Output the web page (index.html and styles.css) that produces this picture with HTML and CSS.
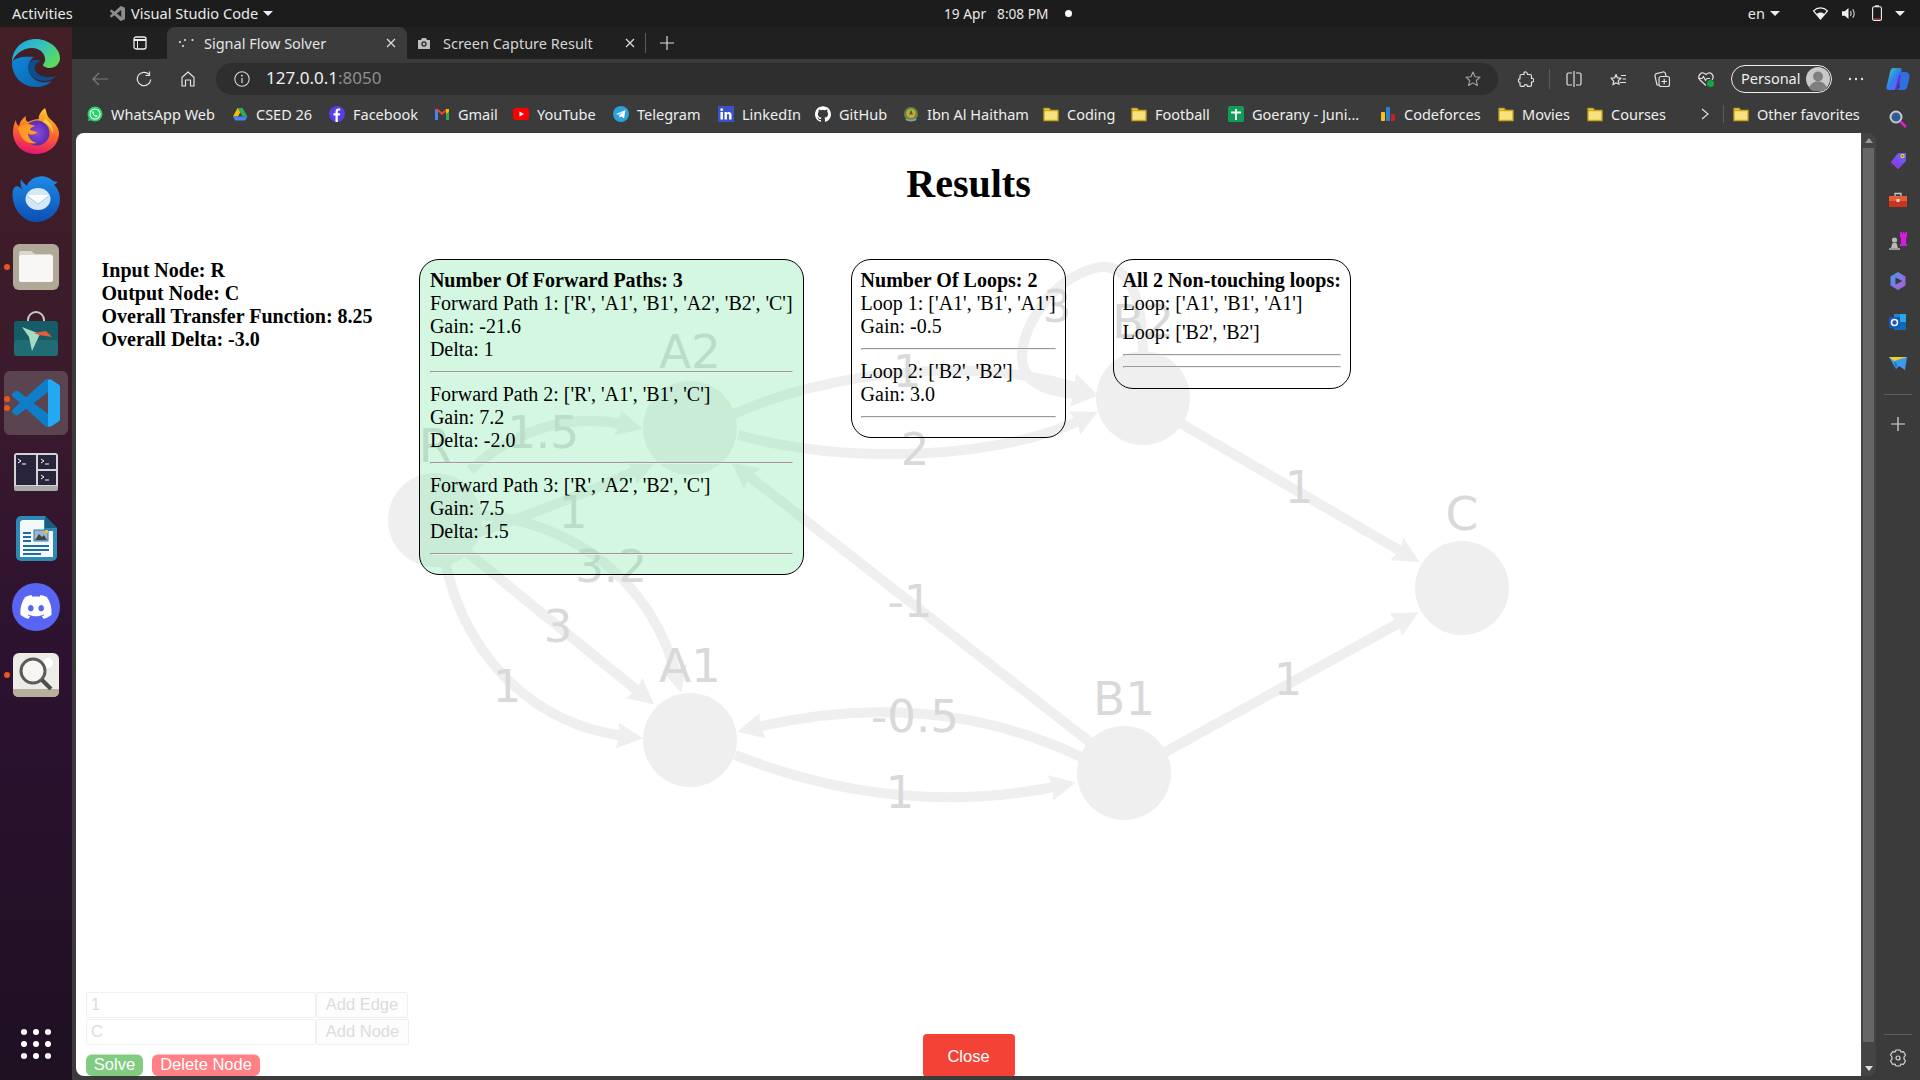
FILE: index.html
```html
<!DOCTYPE html>
<html lang="en">
<head>
<meta charset="utf-8">
<title>Signal Flow Solver</title>
<link rel="stylesheet" href="styles.css">
</head>
<body>
<svg class="defs" aria-hidden="true">
  <defs>
    <linearGradient id="edgeTop" x1="0" y1="0" x2="1" y2="0.6"><stop offset="0" stop-color="#1b9de2"/><stop offset=".55" stop-color="#35c1c0"/><stop offset="1" stop-color="#5ada5f"/></linearGradient>
    <linearGradient id="edgeBody" x1="0" y1="0" x2="1" y2="1"><stop offset="0" stop-color="#0f86d8"/><stop offset="1" stop-color="#0b62ad"/></linearGradient>
    <linearGradient id="foxOuter" x1="0.6" y1="0" x2="0.4" y2="1"><stop offset="0" stop-color="#ffc928"/><stop offset=".5" stop-color="#ff6a2b"/><stop offset="1" stop-color="#e3146f"/></linearGradient>
    <radialGradient id="foxCore"><stop offset="0" stop-color="#8e4bd8"/><stop offset="1" stop-color="#5a2bb0"/></radialGradient>
    <linearGradient id="tbird" x1="0" y1="0" x2="0" y2="1"><stop offset="0" stop-color="#1f8ae6"/><stop offset="1" stop-color="#0b4fb4"/></linearGradient>
    <linearGradient id="copilot" x1="0" y1="0" x2="1" y2="1"><stop offset="0" stop-color="#3fd8a8"/><stop offset=".5" stop-color="#2f7df0"/><stop offset="1" stop-color="#7a5af0"/></linearGradient>
    <linearGradient id="bingLike" x1="0" y1="0" x2="1" y2="1"><stop offset="0" stop-color="#3aa0f0"/><stop offset="1" stop-color="#c050d8"/></linearGradient>
    <symbol id="folder" viewBox="0 0 16 16"><path d="M1 2.500h5l1.500 2H15v10H1z" fill="#f7e27d" stroke="#c9a51c" stroke-width="1.300" stroke-linejoin="round"/><path d="M1 4.500h6.500" stroke="#c9a51c" stroke-width="1.300"/></symbol>
    <symbol id="vscode" viewBox="0 0 24 24"><path d="M23.15 2.587L18.21.21a1.494 1.494 0 0 0-1.705.29l-9.46 8.63-4.12-3.128a.999.999 0 0 0-1.276.057L.327 7.261A1 1 0 0 0 .326 8.74L3.899 12 .326 15.26a1 1 0 0 0 .001 1.479L1.65 17.94a.999.999 0 0 0 1.276.057l4.12-3.128 9.46 8.63a1.492 1.492 0 0 0 1.704.29l4.942-2.377A1.5 1.5 0 0 0 24 20.06V3.939a1.5 1.5 0 0 0-.85-1.352zm-5.146 14.861L10.826 12l7.178-5.448v10.896z"/></symbol>
    <marker id="head" viewBox="0 0 26 26" markerUnits="userSpaceOnUse" markerWidth="26" markerHeight="26" refX="14" refY="13" orient="auto"><path d="M0 0L26 13L0 26L3 13z" fill="#efefef"/></marker>
  </defs>
</svg>

<div class="screen">
  <header class="topbar">
    <div class="top-left">
      <span class="activities">Activities</span>
      <svg class="top-app-icon" viewBox="0 0 24 24"><use href="#vscode" fill="#8d8d8d"/></svg>
      <span>Visual Studio Code</span>
      <i class="caret"></i>
    </div>
    <div class="top-center">
      <span>19 Apr</span><span>8:08 PM</span><i class="rec-dot"></i>
    </div>
    <div class="top-right">
      <span class="lang">en</span><i class="caret"></i>
      <svg class="tray tray-wifi" viewBox="0 0 16 14"><path d="M8 13L.5 4.200C2.500 2.200 5 1 8 1s5.500 1.200 7.500 3.200z" fill="none" stroke="#f2f2f2" stroke-width="1.300"/><path d="M8 13L3.600 7.800C4.800 6.700 6.300 6 8 6s3.200.7 4.400 1.800z" fill="#f2f2f2"/></svg>
      <svg class="tray tray-sound" viewBox="0 0 16 14"><path d="M1 4.500h3L8 1v12L4 9.500H1z" fill="#f2f2f2"/><path d="M10 4.500c1 1.500 1 3.500 0 5M12.500 2.500c2 2.700 2 6.300 0 9" fill="none" stroke="#cfcfcf" stroke-width="1.200"/></svg>
      <svg class="tray tray-batt" viewBox="0 0 10 16"><rect x=".6" y="1.800" width="8.800" height="13.600" rx="1.500" fill="none" stroke="#f2f2f2" stroke-width="1.100"/><rect x="3" y=".3" width="4" height="1.500" fill="#f2f2f2"/><rect x="2" y="13" width="6" height="1.200" fill="#c01c28"/></svg>
      <i class="caret caret-last"></i>
    </div>
  </header>

  <div class="desktop">
    <nav class="dock">
      <div class="dock-item">
        <svg class="dock-icon" viewBox="0 0 48 48"><path d="M24 0C10 0 0 10 0 24c2-8 10-15 20-15 9 0 14 7 13 13-.5 2-2 3-2 4 0 1 3 3 7 3 5 0 10-4 10-10C48 9 36 0 24 0z" fill="url(#edgeTop)"/><path d="M0 24c0 13 10 24 24 24 6 0 12-2 16-6-8 3-18 1-22-7-3-7-1-14 4-17C12 17 2 18 0 24z" fill="url(#edgeBody)"/><path d="M16 28c0 9 9 14 17 14 4 0 8-1.500 11-5-6 2-13 2-18-2-3-2-4-5-3-8 1-3 4-5 6-5-5-3-13 0-13 6z" fill="#0c4f90"/></svg>
      </div>
      <div class="dock-item">
        <svg class="dock-icon" viewBox="0 0 48 48"><path d="M33 1c2 4 1 7 5 11 5 4 9 9 9 14 0 12-10 21-23 21S1 38 1 25c0-4 1-9 3-12 0 3 1 5 3 6 1-5 4-8 7-10-1 3 0 5 2 6 4-2 8-3 11-3-1-3 2-8 6-11z" fill="url(#foxOuter)"/><circle cx="25" cy="26" r="12.500" fill="url(#foxCore)"/><path d="M6 21c4-4 11-5 17-2-3 1-5 2-5 4 2 1 7 1 7 3-4 2-8 2-9 0 0 5 4 9 9 10-8 2-15-3-17-9z" fill="#ff9a24"/><path d="M33 12c5 3 9 8 8 15-1-5-5-10-10-12z" fill="#ffd23a"/></svg>
      </div>
      <div class="dock-item">
        <svg class="dock-icon" viewBox="0 0 48 48"><path d="M9 4c-1 5 0 8 2 11C7 11 3 9 1 15c-3 13 7 32 23 32 13 0 24-10 24-23 0-6-3-12-6-14l4-3-5-1c-4-4-10-6-16-4-5 1-9 5-10 9-3-3-5-4-6-7z" fill="url(#tbird)"/><ellipse cx="26" cy="24" rx="12.500" ry="11" fill="#d4e8f8"/><path d="M14 20l12 9 12-9" fill="#fff" stroke="#a5c8ea" stroke-width="1"/></svg>
      </div>
      <div class="dock-item running">
        <svg class="dock-icon" viewBox="0 0 48 48"><rect x="1" y="1" width="46" height="46" rx="6" fill="#b0a997"/><path d="M7 10a2 2 0 0 1 2-2h10l4 3h15a3 3 0 0 1 3 3v22a3 3 0 0 1-3 3H9a2 2 0 0 1-2-2z" fill="#dcd8cf"/><rect x="7" y="12" width="34" height="27" rx="2.500" fill="#f8f7f5"/></svg>
      </div>
      <div class="dock-item">
        <svg class="dock-icon" viewBox="0 0 48 48"><path d="M16 11V9a8 8 0 0 1 16 0v2" fill="none" stroke="#c8c8c8" stroke-width="2"/><rect x="2" y="10" width="44" height="35" rx="3" fill="#155c66"/><rect x="2" y="29" width="44" height="16" rx="3" fill="#1f6c74"/><path d="M10 16l18 7-8 17-3-14z" fill="#a6dac2"/><path d="M22 22l12-2 6 6-13-2z" fill="#e9583a"/></svg>
      </div>
      <div class="dock-item active running two">
        <div class="tile"><svg class="dock-icon" viewBox="0 0 24 24"><use href="#vscode" fill="#0f7dc8"/><path d="M18 6.600V.4c.4-.3 1-.4 1.500-.2l3.650 2.387A1.500 1.500 0 0 1 24 3.939V20.060a1.500 1.500 0 0 1-.85 1.353L19.500 23.800c-.5.200-1.100.1-1.500-.2z" fill="#23a9f2"/></svg></div>
      </div>
      <div class="dock-item">
        <svg class="dock-icon" viewBox="0 0 48 48"><rect x="2" y="6" width="44" height="37" rx="3" fill="#d4d4d4"/><rect x="2" y="39" width="44" height="5" rx="2" fill="#a8a8a8"/><rect x="4" y="8" width="20" height="30" fill="#28243c"/><rect x="26" y="8" width="18" height="14" fill="#28243c"/><rect x="26" y="24" width="18" height="14" fill="#28243c"/><path d="M6 12l3 2-3 2M29 12l3 2-3 2M29 28l3 2-3 2" stroke="#fff" fill="none"/><path d="M10 17h4M33 17h4M33 33h4" stroke="#fff"/></svg>
      </div>
      <div class="dock-item">
        <svg class="dock-icon" viewBox="0 0 48 48"><path d="M9 1h24l12 12v28a5 5 0 0 1-5 5H9a5 5 0 0 1-5-5V6a5 5 0 0 1 5-5z" fill="#2e8ab5"/><path d="M10 5h22v11h9v26H8V7z" fill="#f4f8fb"/><path d="M33 1l12 12H33z" fill="#185d80"/><rect x="11" y="17" width="8" height="2" fill="#1f6d9c"/><rect x="11" y="21" width="8" height="2" fill="#1f6d9c"/><rect x="11" y="25" width="8" height="2" fill="#1f6d9c"/><rect x="22" y="15" width="14" height="11" fill="#9fb8c8" stroke="#2d7ca8"/><path d="M23 25l4-6 3 3 2-2 3 5z" fill="#444"/><rect x="33" y="15" width="3" height="3" fill="#f0c030"/><rect x="11" y="30" width="26" height="2" fill="#1f6d9c"/><rect x="11" y="34" width="26" height="2" fill="#1f6d9c"/><rect x="11" y="38" width="18" height="2" fill="#1f6d9c"/></svg>
      </div>
      <div class="dock-item">
        <svg class="dock-icon" viewBox="0 0 48 48"><circle cx="24" cy="24" r="24" fill="#5865f2"/><g transform="translate(8.400 8.400) scale(1.300)"><path fill="#fff" d="M20.317 4.3698a19.7913 19.7913 0 00-4.8851-1.5152.0741.0741 0 00-.0785.0371c-.211.3753-.4447.8648-.6083 1.2495-1.8447-.2762-3.68-.2762-5.4868 0-.1636-.3933-.4058-.8742-.6177-1.2495a.077.077 0 00-.0785-.037 19.7363 19.7363 0 00-4.8852 1.515.0699.0699 0 00-.0321.0277C.5334 9.0458-.319 13.5799.0992 18.0578a.0824.0824 0 00.0312.0561c2.0528 1.5076 4.0413 2.4228 5.9929 3.0294a.0777.0777 0 00.0842-.0276c.4616-.6304.8731-1.2952 1.226-1.9942a.076.076 0 00-.0416-.1057c-.6528-.2476-1.2743-.5495-1.8722-.8923a.077.077 0 01-.0076-.1277c.1258-.0943.2517-.1923.3718-.2914a.0743.0743 0 01.0776-.0105c3.9278 1.7933 8.18 1.7933 12.0614 0a.0739.0739 0 01.0785.0095c.1202.099.246.1981.3728.2924a.077.077 0 01-.0066.1276 12.2986 12.2986 0 01-1.873.8914.0766.0766 0 00-.0407.1067c.3604.698.7719 1.3628 1.225 1.9932a.076.076 0 00.0842.0286c1.961-.6067 3.9495-1.5219 6.0023-3.0294a.077.077 0 00.0313-.0552c.5004-5.177-.8382-9.6739-3.5485-13.6604a.061.061 0 00-.0312-.0286zM8.02 15.3312c-1.1825 0-2.1569-1.0857-2.1569-2.419 0-1.3332.9555-2.4189 2.157-2.4189 1.2108 0 2.1757 1.0952 2.1568 2.419 0 1.3332-.9555 2.4189-2.1569 2.4189zm7.9748 0c-1.1825 0-2.1569-1.0857-2.1569-2.419 0-1.3332.9554-2.4189 2.1569-2.4189 1.2108 0 2.1757 1.0952 2.1568 2.419 0 1.3332-.946 2.4189-2.1568 2.4189Z"/></g></svg>
      </div>
      <div class="dock-item running">
        <svg class="dock-icon" viewBox="0 0 48 48"><rect x="1" y="2" width="46" height="44" rx="6" fill="#ecebe6"/><path d="M1 38h46v3a5 5 0 0 1-5 5H6a5 5 0 0 1-5-5z" fill="#b7b19c"/><circle cx="36" cy="12" r="5" fill="#fff"/><circle cx="21" cy="20" r="12" fill="#f6f5f2" stroke="#5b5b5b" stroke-width="3"/><path d="M30 29l9 9" stroke="#4d4d4d" stroke-width="4"/></svg>
      </div>
      <div class="dock-item apps">
        <svg class="apps-icon" viewBox="0 0 30 30"><g fill="#fff"><circle cx="3" cy="3" r="3"/><circle cx="15" cy="3" r="3"/><circle cx="27" cy="3" r="3"/><circle cx="3" cy="15" r="3"/><circle cx="15" cy="15" r="3"/><circle cx="27" cy="15" r="3"/><circle cx="3" cy="27" r="3"/><circle cx="15" cy="27" r="3"/><circle cx="27" cy="27" r="3"/></g></svg>
      </div>
    </nav>

    <div class="browser">
      <div class="tabstrip">
        <div class="tab-cell">
          <svg class="ic14" viewBox="0 0 14 14"><rect x="1" y="1" width="12" height="12" rx="2" fill="none" stroke="#eee" stroke-width="1.300"/><path d="M1 4h12" stroke="#eee" stroke-width="2"/><path d="M4.500 4v9" stroke="#eee"/></svg>
        </div>
        <div class="tab tab-active">
          <svg class="tab-fav" viewBox="0 0 17 12"><g fill="#ddd"><circle cx="2" cy="5" r="1.100"/><circle cx="7" cy="3" r="1.100"/><circle cx="14.500" cy="3" r="1.100"/><circle cx="5" cy="9" r="1.100"/></g></svg>
          <span class="tab-title">Signal Flow Solver</span>
          <svg class="tab-close" viewBox="0 0 12 12"><path d="M2 2l8 8M10 2l-8 8" stroke="#ddd" stroke-width="1.200"/></svg>
        </div>
        <div class="tab tab-other">
          <svg class="tab-fav-cam" viewBox="0 0 14 14"><path d="M1 4h3l1-2h4l1 2h3v9H1z" fill="#bdbdbd"/><circle cx="7" cy="8" r="2.700" fill="#333"/><circle cx="7" cy="8" r="1.300" fill="#bdbdbd"/></svg>
          <span class="tab-title">Screen Capture Result</span>
          <svg class="tab-close" viewBox="0 0 12 12"><path d="M2 2l8 8M10 2l-8 8" stroke="#ddd" stroke-width="1.200"/></svg>
        </div>
        <i class="tab-sep"></i>
        <div class="tab-plus">
          <svg class="ic14" viewBox="0 0 14 14"><path d="M7 0v14M0 7h14" stroke="#ddd" stroke-width="1.200"/></svg>
        </div>
      </div>

      <div class="toolbar">
        <div class="tool"><svg class="ic16" viewBox="0 0 16 16"><path d="M16 8H1M7 2L1 8l6 6" fill="none" stroke="#7d7d7d" stroke-width="1.200"/></svg></div>
        <div class="tool"><svg class="ic16" viewBox="0 0 16 16"><path d="M13 3.500A6.700 6.700 0 1 0 14.700 8.500" fill="none" stroke="#e2e2e2" stroke-width="1.200"/><path d="M13.500 .5v4h-4" fill="none" stroke="#e2e2e2" stroke-width="1.200"/></svg></div>
        <div class="tool"><svg class="ic16" viewBox="0 0 16 16"><path d="M2 15V6.500L8 1l6 5.500V15h-3.500V9h-5v6z" fill="none" stroke="#e2e2e2" stroke-width="1.200" stroke-linejoin="round"/></svg></div>
        <div class="address">
          <svg class="ic16 info" viewBox="0 0 16 16"><circle cx="8" cy="8" r="7.200" fill="none" stroke="#d8d8d8" stroke-width="1.100"/><path d="M8 7v5" stroke="#d8d8d8" stroke-width="1.200"/><circle cx="8" cy="4.700" r=".9" fill="#d8d8d8"/></svg>
          <span class="url">127.0.0.1<span class="url-port">:8050</span></span>
          <svg class="ic16 addr-star" viewBox="0 0 16 16"><path d="M8 1l2.100 4.700 5 .5-3.800 3.300 1.100 5L8 11.900l-4.400 2.600 1.100-5L.9 6.200l5-.5z" fill="none" stroke="#a5a5a5" stroke-width="1.100" stroke-linejoin="round"/></svg>
        </div>
        <div class="tool"><svg class="ic16" viewBox="0 0 16 16"><path d="M6 1.500c1-1 3-.7 3.300 1l.2 1h2.500c.8 0 1.500.7 1.500 1.500v2.500h1c1.700.2 1.700 3.300 0 3.500h-1V14c0 .8-.7 1.300-1.500 1.300h-2.500c-.2-2.200-3.300-2.200-3.500 0H3.500c-.8 0-1.500-.5-1.500-1.300v-2.500C0 11.300-.3 8 2 7.700V5c0-.8.7-1.500 1.500-1.500H6z" fill="none" stroke="#e2e2e2" stroke-width="1.200"/></svg></div>
        <i class="tool-sep"></i>
        <div class="tool"><svg class="ic16" viewBox="0 0 16 16"><path d="M6 2H2.500a1.500 1.500 0 0 0-1.500 1.500v9A1.500 1.500 0 0 0 2.500 14H6M10 2h3.500A1.500 1.500 0 0 1 15 3.500v9a1.500 1.500 0 0 1-1.500 1.500H10" fill="none" stroke="#e2e2e2" stroke-width="1.200"/><path d="M8 0v16" stroke="#e2e2e2" stroke-width="1.200"/></svg></div>
        <div class="tool"><svg class="ic16" viewBox="0 0 16 16"><path d="M6 1.500l1.500 3.400 3.500.3-2.700 2.400.8 3.700L6 9.800l-3.100 2 .8-3.700L1 5.200l3.500-.3z" fill="none" stroke="#e2e2e2" stroke-width="1.200" stroke-linejoin="round" transform="translate(0 2)"/><path d="M11 4.500h5M12.500 8h3.500M10 11.500h6" stroke="#e2e2e2" stroke-width="1.200"/></svg></div>
        <div class="tool"><svg class="ic16" viewBox="0 0 16 16"><path d="M5 14H3L1 5a2 2 0 0 1 1.500-2.400L9 1a2 2 0 0 1 2.400 1.500L12 5" fill="none" stroke="#e2e2e2" stroke-width="1.200"/><rect x="5" y="5.500" width="10.500" height="10" rx="2" fill="#3b3b3b" stroke="#e2e2e2" stroke-width="1.200"/><path d="M10.200 7.800v5.400M7.500 10.500h5.400" stroke="#e2e2e2" stroke-width="1.200"/></svg></div>
        <div class="tool"><svg class="ic16" viewBox="0 0 16 16"><path d="M8 14.500L2 9C-1 5 3-.5 8 3.500 13-.5 17 5 14 9" fill="none" stroke="#e2e2e2" stroke-width="1.200"/><path d="M0 7.500h4l1.500-2 2 4 1.500-2h3" fill="none" stroke="#e2e2e2" stroke-width="1.100"/><circle cx="12.500" cy="12.500" r="3.500" fill="#16a34a"/></svg></div>
        <div class="profile">
          <span>Personal</span>
          <svg class="avatar" viewBox="0 0 24 24"><circle cx="12" cy="12" r="12" fill="#c8c8c8"/><circle cx="12" cy="9.500" r="5" fill="#7f7f7f"/><path d="M3 21c2-5 5-6.500 9-6.500s7 1.500 9 6.500a12 12 0 0 1-18 0z" fill="#7f7f7f"/></svg>
        </div>
        <div class="tool"><svg class="ic16" viewBox="0 0 16 4"><g fill="#e2e2e2"><circle cx="2" cy="2" r="1.200"/><circle cx="8" cy="2" r="1.200"/><circle cx="14" cy="2" r="1.200"/></g></svg></div>
        <div class="copilot-cell"><svg class="copilot" viewBox="0 0 24 24"><path d="M7 1h7c1.500 0 2 1.500 1.500 3L11 20c-.5 2-2 3-4 3H3c-2 0-3-1.500-2.500-3L4 5c.5-2 1.500-4 3-4z" fill="url(#copilot)"/><path d="M13 5h6c3 0 5 2 4.500 5l-2 9c-.5 2.500-2 4-4.500 4h-7c2 0 3-1 3.500-3z" fill="#2f6fe4"/><path d="M9 22l4-14 2 .2L11 23z" fill="#6a2bdc"/></svg></div>
      </div>

      <div class="lower">
        <div class="lower-main">
          <div class="bookmarks">
            <a class="bm"><svg class="bm-ic" viewBox="0 0 16 16"><circle cx="8" cy="8" r="7.500" fill="#25d366"/><path d="M1 15l1.200-4.500L5 14z" fill="#25d366"/><circle cx="8" cy="8" r="5.500" fill="#fff"/><circle cx="8" cy="8" r="4.500" fill="#25d366"/><path d="M5.800 5.500c1-.8 1 1 1.200 1.500l-.4.800c.5 1 1 1.400 1.800 1.800l.8-.5c.5.200 2 .6 1.400 1.500-1.500 1.600-6.600-2.500-4.800-5.100z" fill="#fff"/></svg><span>WhatsApp Web</span></a>
            <a class="bm"><svg class="bm-ic" viewBox="0 0 16 16"><path d="M5.500 1h5L6 9.500H1z" fill="#fbbc04" transform="translate(0 1)"/><path d="M10.500 2l5 8.500H10.500L5.500 2z" fill="#34a853"/><path d="M1 10.500h14.500l-2.500 4H3.200z" fill="#4285f4"/></svg><span>CSED 26</span></a>
            <a class="bm"><svg class="bm-ic" viewBox="0 0 16 16"><circle cx="8" cy="8" r="8" fill="#5b3de8"/><path d="M8.800 16V9.500h2l.4-2.300H8.800V5.800c0-.8.3-1.200 1.200-1.200h1.200V2.700c-2.800-.6-4.700.2-4.700 2.900v1.600h-2v2.300h2V16z" fill="#fff"/></svg><span>Facebook</span></a>
            <a class="bm"><svg class="bm-ic" viewBox="0 0 16 16"><path d="M1 3h3v11H1z" fill="#4285f4"/><path d="M12 3h3v11h-3z" fill="#34a853"/><path d="M1 3l3 0 4 3.500L12 3l3 0-7 6z" fill="#ea4335"/><path d="M12 3h3v2.500l-3 2.500z" fill="#fbbc04"/></svg><span>Gmail</span></a>
            <a class="bm"><svg class="bm-ic" viewBox="0 0 16 16"><rect y="2" width="16" height="12" rx="3" fill="#f00"/><path d="M6.500 5.500l4.500 2.500-4.500 2.500z" fill="#fff"/></svg><span>YouTube</span></a>
            <a class="bm"><svg class="bm-ic" viewBox="0 0 16 16"><circle cx="8" cy="8" r="8" fill="#2aa1da"/><path d="M3 8l9.500-4-1.500 8.500-3-2.200-1.500 1.500-.3-2.500 4.300-3.800-5.300 3.300z" fill="#fff"/></svg><span>Telegram</span></a>
            <a class="bm"><svg class="bm-ic" viewBox="0 0 16 16"><rect width="16" height="16" fill="#3a53c4"/><rect x="2.500" y="6" width="2.400" height="7.500" fill="#fff"/><circle cx="3.700" cy="3.700" r="1.400" fill="#fff"/><path d="M6.500 6h2.300v1.100c1.200-1.800 4.700-1.600 4.700 1.600v4.800h-2.400V9.300c0-1.700-2.200-1.500-2.200 0v4.200H6.500z" fill="#fff"/></svg><span>LinkedIn</span></a>
            <a class="bm"><svg class="bm-ic" viewBox="0 0 24 24"><path fill="#fff" d="M12 .297c-6.630 0-12 5.373-12 12 0 5.303 3.438 9.800 8.205 11.385.6.113.82-.258.82-.577 0-.285-.01-1.040-.015-2.040-3.338.724-4.042-1.610-4.042-1.610C4.422 18.070 3.633 17.700 3.633 17.700c-1.087-.744.084-.729.084-.729 1.205.084 1.838 1.236 1.838 1.236 1.070 1.835 2.809 1.305 3.495.998.108-.776.417-1.305.76-1.605-2.665-.3-5.466-1.332-5.466-5.930 0-1.310.465-2.380 1.235-3.220-.135-.303-.54-1.523.105-3.176 0 0 1.005-.322 3.300 1.230.96-.267 1.980-.399 3-.405 1.020.006 2.040.138 3 .405 2.280-1.552 3.285-1.230 3.285-1.230.645 1.653.24 2.873.12 3.176.765.84 1.230 1.910 1.230 3.220 0 4.610-2.805 5.625-5.475 5.920.42.36.81 1.096.81 2.220 0 1.606-.015 2.896-.015 3.286 0 .315.21.69.825.57C20.565 22.092 24 17.592 24 12.297c0-6.627-5.373-12-12-12"/></svg><span>GitHub</span></a>
            <a class="bm"><svg class="bm-ic" viewBox="0 0 16 16"><circle cx="8" cy="8" r="7" fill="#5c8a4a"/><circle cx="8" cy="7.500" r="4.500" fill="#d8a630"/><path d="M8 3.500l2 5H6z" fill="#3a6a40"/><path d="M3 13c2 2 8 2 10 0" stroke="#999" stroke-width="2" fill="none"/></svg><span>Ibn Al Haitham</span></a>
            <a class="bm"><svg class="bm-ic"><use href="#folder"/></svg><span>Coding</span></a>
            <a class="bm"><svg class="bm-ic"><use href="#folder"/></svg><span>Football</span></a>
            <a class="bm"><svg class="bm-ic" viewBox="0 0 16 16"><rect width="16" height="16" rx="1.500" fill="#0f9d58"/><path d="M8 3v11M3 6.500h10" stroke="#fff" stroke-width="2"/></svg><span>Goerany - Juni...</span></a>
            <a class="bm"><svg class="bm-ic" viewBox="0 0 16 16"><rect x="1" y="6" width="4" height="9" rx=".8" fill="#f5c518"/><rect x="6" y="1" width="4" height="14" rx=".8" fill="#2f7fd0"/><rect x="11" y="8" width="4" height="7" rx=".8" fill="#c81e26"/></svg><span>Codeforces</span></a>
            <a class="bm"><svg class="bm-ic"><use href="#folder"/></svg><span>Movies</span></a>
            <a class="bm"><svg class="bm-ic"><use href="#folder"/></svg><span>Courses</span></a>
            <div class="bm-more"><svg class="chev" viewBox="0 0 8 12"><path d="M1 1l6 5-6 5" fill="none" stroke="#ddd" stroke-width="1.200"/></svg></div>
            <div class="bm-sep"><i></i></div>
            <a class="bm bm-other"><svg class="bm-ic"><use href="#folder"/></svg><span>Other favorites</span></a>
          </div>

          <div class="main">
            <main class="page">
              <svg class="graph" viewBox="76 133 1785 943" aria-label="Signal flow graph">
                <g class="edges" marker-end="url(#head)">
                  <path d="M470 470Q545 405 631 426"/>
                  <path d="M470 535Q560 505 644 467"/>
                  <path d="M480 515C560 520 650 570 678 681"/>
                  <path d="M435 526L645 697"/>
                  <path d="M445 560C460 640 520 725 631 737"/>
                  <path d="M735 755Q900 820 1064 785"/>
                  <path d="M1081 757Q930 685 749 729"/>
                  <path d="M1100 750L741 470"/>
                  <path d="M1160 755L1408 618"/>
                  <path d="M1175 420L1409 556"/>
                  <path d="M732 415C830 370 980 355 1085 390"/>
                  <path d="M738 435C850 465 1000 460 1087 417"/>
                  <path d="M1143 355C1143 280 1120 262 1095 268C1050 280 1020 330 1022 360C1025 390 1060 393 1085 395"/>
                </g>
                <g class="nodes">
                  <circle cx="435" cy="520" r="47"/>
                  <circle cx="690" cy="428" r="47"/>
                  <circle cx="1143" cy="398" r="47"/>
                  <circle cx="1462" cy="588" r="47"/>
                  <circle cx="690" cy="740" r="47"/>
                  <circle cx="1124" cy="773" r="47"/>
                </g>
                <g class="labels node-labels">
                  <text x="435" y="462">R</text>
                  <text x="690" y="368">A2</text>
                  <text x="1143" y="338">B2</text>
                  <text x="1462" y="530">C</text>
                  <text x="690" y="682">A1</text>
                  <text x="1124" y="715">B1</text>
                </g>
                <g class="labels edge-labels">
                  <text x="543" y="448">1.5</text>
                  <text x="573" y="528">1</text>
                  <text x="611" y="582">3.2</text>
                  <text x="558" y="642">3</text>
                  <text x="507" y="702">1</text>
                  <text x="910" y="617">-1</text>
                  <text x="915" y="732">-0.5</text>
                  <text x="900" y="808">1</text>
                  <text x="1288" y="695">1</text>
                  <text x="1299" y="503">1</text>
                  <text x="915" y="465">2</text>
                  <text x="907" y="387">1</text>
                  <text x="1057" y="322">3</text>
                </g>
              </svg>

              <form class="controls">
                <div class="control-row"><input class="ctl-input" value="1" readonly><button type="button" class="ctl-btn">Add Edge</button></div>
                <div class="control-row"><input class="ctl-input" value="C" readonly><button type="button" class="ctl-btn ctl-btn-wide">Add Node</button></div>
                <div class="action-row"><button type="button" class="act act-solve">Solve</button><button type="button" class="act act-delete">Delete Node</button></div>
              </form>

              <section class="results">
                <h1 class="results-title">Results</h1>
                <div class="results-row">
                  <div class="summary">
                    <div>Input Node: R</div>
                    <div>Output Node: C</div>
                    <div>Overall Transfer Function: 8.25</div>
                    <div>Overall Delta: -3.0</div>
                  </div>
                  <div class="card card-green">
                    <div class="card-head">Number Of Forward Paths: 3</div>
                    <div>Forward Path 1: ['R', 'A1', 'B1', 'A2', 'B2', 'C']</div>
                    <div>Gain: -21.6</div>
                    <div>Delta: 1</div>
                    <hr>
                    <div>Forward Path 2: ['R', 'A1', 'B1', 'C']</div>
                    <div>Gain: 7.2</div>
                    <div>Delta: -2.0</div>
                    <hr>
                    <div>Forward Path 3: ['R', 'A2', 'B2', 'C']</div>
                    <div>Gain: 7.5</div>
                    <div>Delta: 1.5</div>
                    <hr>
                  </div>
                  <div class="card">
                    <div class="card-head">Number Of Loops: 2</div>
                    <div>Loop 1: ['A1', 'B1', 'A1']</div>
                    <div>Gain: -0.5</div>
                    <hr>
                    <div>Loop 2: ['B2', 'B2']</div>
                    <div>Gain: 3.0</div>
                    <hr>
                  </div>
                  <div class="card card-pairs">
                    <div class="card-head">All 2 Non-touching loops:</div>
                    <div>Loop: ['A1', 'B1', 'A1']</div>
                    <div class="loop-next">Loop: ['B2', 'B2']</div>
                    <hr>
                    <hr>
                  </div>
                </div>
                <button type="button" class="close-btn">Close</button>
              </section>
            </main>

            <div class="scrollbar">
              <i class="arrow-up"></i>
              <div class="thumb"></div>
              <i class="arrow-down"></i>
            </div>
          </div>
        </div>

        <aside class="sidebar">
          <svg class="side-ic" viewBox="0 0 18 18"><circle cx="7" cy="7" r="5.500" fill="#2f5a9a" stroke="#c8c8c8" stroke-width="2"/><path d="M11.500 11.500L17 17" stroke="#e020d0" stroke-width="2.500"/></svg>
          <svg class="side-ic" viewBox="0 0 18 18"><path d="M9 2h8v8l-8 8-7-7z" fill="#6a5af0"/><path d="M2 11l7 7 4-4-6-7z" fill="#8a40e8"/><circle cx="13.500" cy="5" r="1.600" fill="none" stroke="#f5d020" stroke-width="1.200"/></svg>
          <svg class="side-ic" viewBox="0 0 18 18"><path d="M6 5V2.500h6V5" fill="none" stroke="#c8c8c8" stroke-width="1.300"/><rect y="5" width="18" height="5" fill="#ea5b3a"/><rect y="10" width="18" height="6" fill="#c8341c"/><rect x="7.500" y="8" width="3" height="3" fill="#ddd"/></svg>
          <svg class="side-ic" viewBox="0 0 18 18"><circle cx="5.500" cy="8" r="2.600" fill="#b8b8b8"/><path d="M3.500 11h4l1.500 5H2z" fill="#b8b8b8"/><path d="M0 16h11v2H0z" fill="#9a9a9a"/><path d="M11 0h1.800v1.600h1.100V0h1.300v1.600h1.100V0H18v5l-1 1v6h1v2h-7v-2h1V6l-1-1z" fill="#d61ae0"/></svg>
          <svg class="side-ic" viewBox="0 0 18 18"><path d="M9 0l7.500 4.500v9L9 18l-7.500-4.500v-9z" fill="url(#bingLike)"/><path d="M6.500 5.500l7 3.500-7 3.500z" fill="#3b3b3b"/></svg>
          <svg class="side-ic" viewBox="0 0 18 18"><path d="M5 1h12v16H5z" fill="#1a8ad4"/><path d="M11 1h6v8h-6z" fill="#28a8ea"/><path d="M5 9l12 0v8H5z" fill="#0f6cbd"/><rect y="4" width="11" height="11" rx="1" fill="#1558c0"/><circle cx="5.500" cy="9.500" r="3" fill="none" stroke="#fff" stroke-width="1.500"/></svg>
          <svg class="side-ic" viewBox="0 0 18 18"><path d="M0 4h18l-2 13-6-4-3 3z" fill="#3a9af0"/><path d="M0 4h18L5 8z" fill="#f5d020"/><path d="M5 8l2 8 1-5z" fill="#1f6fc8"/></svg>
          <i class="side-sep"></i>
          <svg class="side-ic side-plus" viewBox="0 0 14 14"><path d="M7 0v14M0 7h14" stroke="#ddd" stroke-width="1.200"/></svg>
          <i class="side-sep side-sep-low"></i>
          <svg class="side-ic side-gear" viewBox="0 0 18 18"><path d="M7 1h4l1 2 2.500-.3 2 3.300L15 8v2l1.500 2-2 3.300L12 15l-1 2H7l-1-2-2.500.3-2-3.300L3 10V8L1.500 6l2-3.300L6 3z" fill="none" stroke="#d8d8d8" stroke-width="1.200" stroke-linejoin="round"/><circle cx="9" cy="9" r="2" fill="none" stroke="#d8d8d8" stroke-width="1.200"/></svg>
        </aside>
      </div>
    </div>
  </div>
</div>
</body>
</html>
```

FILE: styles.css
```css
* { box-sizing: border-box; }
html, body { margin: 0; padding: 0; height: 100%; overflow: hidden; background: #1c1c1c; }
body { font-family: "Noto Sans", "Liberation Sans", sans-serif; color: #eee; }
i { display: block; }
.defs { position: absolute; width: 0; height: 0; }

.screen { width: 1920px; height: 1080px; display: flex; flex-direction: column; overflow: hidden; }

/* GNOME top bar */
.topbar { height: 27px; flex: none; background: #1c1c1c; display: grid; grid-template-columns: 944px 1fr auto; align-items: center; font-size: 13.7px; color: #eaeaea; padding-bottom: 1px; }
.top-left { display: flex; align-items: center; padding-left: 12px; font-size: 14.6px; }
.activities { width: 98px; }
.top-app-icon { width: 15px; height: 15px; margin-right: 6px; }
.caret { width: 0; height: 0; border-left: 5px solid transparent; border-right: 5px solid transparent; border-top: 5px solid #eee; margin-left: 5px; }
.top-center { display: flex; align-items: center; gap: 11px; }
.rec-dot { width: 7px; height: 7px; border-radius: 50%; background: #fff; margin-left: 6px; }
.top-right { display: flex; align-items: center; padding-right: 15px; }
.lang { font-size: 14.5px; }
.tray { display: block; }
.tray-wifi { width: 15px; height: 13px; margin-left: 33px; }
.tray-sound { width: 15px; height: 13px; margin-left: 13px; }
.tray-batt { width: 10px; height: 16px; margin-left: 16px; }
.caret-last { margin-left: 13px; }

.desktop { flex: 1; display: flex; min-height: 0; }

/* Ubuntu dock */
.dock { width: 72px; flex: none; display: flex; flex-direction: column; padding: 2px 0 2px; background: linear-gradient(180deg, #431f26 0%, #3a1a2c 35%, #2c1230 60%, #1f1022 100%); }
.dock-item { height: 68px; flex: none; display: flex; align-items: center; justify-content: center; position: relative; }
.dock-icon { width: 48px; height: 48px; display: block; }
.dock-item.running::before { content: ""; position: absolute; left: 4px; top: 31px; width: 6px; height: 6px; border-radius: 50%; background: #e95420; }
.dock-item.two::after { content: ""; position: absolute; left: 4px; top: 36px; width: 6px; height: 6px; border-radius: 50%; background: #e95420; }
.dock-item.two::before { top: 27px; }
.tile { width: 64px; height: 64px; border-radius: 6px; background: #5a4450; display: flex; align-items: center; justify-content: center; }
.apps { margin-top: auto; }
.apps-icon { width: 30px; height: 30px; }

/* Browser chrome */
.browser { flex: 1; display: flex; flex-direction: column; min-width: 0; background: #3b3b3b; }
.ic14 { width: 14px; height: 14px; display: block; }
.ic16 { width: 16px; height: 16px; display: block; }

.tabstrip { height: 32px; flex: none; background: #202020; display: flex; align-items: stretch; padding-left: 46px; font-size: 14.5px; color: #e4e4e4; }
.tab-cell { width: 44px; margin-right: 5px; display: flex; align-items: center; justify-content: center; }
.tab { display: flex; align-items: center; }
.tab-active { width: 240px; background: #3b3b3b; border-radius: 8px 8px 0 0; padding: 0 10px 0 11px; }
.tab-other { width: 238px; padding: 0 9px 0 10px; color: #d4d4d4; }
.tab-fav { width: 17px; height: 12px; margin-right: 9px; }
.tab-fav-cam { width: 14px; height: 14px; margin-right: 12px; }
.tab-title { flex: 1; white-space: nowrap; line-height: 20px; margin-bottom: 1px; }
.tab-close { width: 12px; height: 12px; }
.tab-sep { width: 1px; height: 20px; background: #5b5b5b; align-self: center; }
.tab-plus { width: 42px; display: flex; align-items: center; justify-content: center; }

.toolbar { height: 36px; flex: none; display: flex; align-items: flex-end; padding-left: 6px; }
.tool { width: 44px; height: 32px; display: flex; align-items: center; justify-content: center; }
.address { width: 1282px; height: 32px; margin: 0 6px; border-radius: 16px; background: #2e2e2e; display: flex; align-items: center; padding-left: 18px; }
.url { margin-left: 16px; font-size: 17px; line-height: 22px; margin-bottom: 2px; color: #f0f0f0; flex: 1; }
.url-port { color: #8f8f8f; }
.addr-star { margin-right: 17px; }
.tool-sep { width: 1px; height: 20px; margin: 0 2px 6px 1px; background: #5b5b5b; }
.profile { width: 101px; height: 28px; margin: 0 2px 2px 3px; border: 1px solid #eee; border-radius: 14px; display: flex; align-items: center; justify-content: space-between; padding-left: 9px; font-size: 14.5px; line-height: 20px; color: #eee; }
.profile span { margin-bottom: 2px; }
.avatar { width: 24px; height: 24px; margin-right: 1px; }
.copilot-cell { width: 40px; height: 32px; display: flex; align-items: center; justify-content: center; }
.copilot { width: 24px; height: 24px; }

/* Lower area: the sidebar runs alongside bookmarks and page */
.lower { flex: 1; min-height: 0; display: flex; }
.lower-main { flex: 1; min-width: 0; display: flex; flex-direction: column; }

.bookmarks { height: 38px; flex: none; display: grid; grid-template-columns: 145px 97px 105px 79px 100px 105px 97px 88px 140px 88px 97px 152px 118px 89px 108px 20px 16px 1fr; align-items: center; padding-left: 15px; font-size: 14.5px; color: #eee; }
.bm { display: flex; align-items: center; gap: 8px; white-space: nowrap; }
.bm-ic { width: 16px; height: 16px; flex: none; }
.bm-more { display: flex; justify-content: center; }
.chev { width: 8px; height: 12px; }
.bm-sep i { width: 1px; height: 18px; background: #5b5b5b; margin: 0 auto; }
.bm-other { padding-left: 2px; }

.main { flex: 1; display: flex; min-height: 0; padding-left: 4px; }

/* Page */
.page { flex: 1; margin-bottom: 4px; background: #fff; border-radius: 8px 0 0 8px; position: relative; overflow: hidden; display: flex; flex-direction: column; justify-content: flex-end; min-width: 0; }
.graph { position: absolute; inset: 0; width: 100%; height: 100%; }
.edges { fill: none; stroke: #efefef; stroke-width: 10; }
.nodes { fill: #efefef; }
.labels { font-family: "DejaVu Sans", sans-serif; fill: #d9d9d9; text-anchor: middle; }
.node-labels { font-size: 47px; }
.edge-labels { font-size: 45px; }

.controls { padding-left: 10px; position: relative; font-family: "Liberation Sans", Arial, sans-serif; font-size: 16.5px; }
.control-row { display: flex; margin-bottom: 1px; height: 26px; }
.ctl-input { width: 230px; height: 26px; padding: 0 4px 2px; border: 1px solid #f0f0f0; border-radius: 2px; background: #fff; color: #dcdcdc; font: inherit; }
.ctl-btn { width: 92px; height: 26px; padding: 0 0 2px; border: 1px solid #efefef; border-radius: 2px; background: #fdfdfd; color: #dcdcdc; font: inherit; }
.ctl-btn-wide { width: 93px; }
.action-row { display: flex; gap: 9px; margin-top: 9px; height: 22px; }
.act { height: 22px; padding: 0 0 3px; border: 0; border-top: 1px solid rgba(255,255,255,.5); border-radius: 6px; color: #fff; font: inherit; line-height: 18px; }
.act-solve { width: 57px; background: #82cb82; }
.act-delete { width: 108px; background: #ff8085; }

.results { position: absolute; inset: 0; display: flex; flex-direction: column; font-family: "Liberation Serif", "Times New Roman", serif; color: #000; }
.results-title { margin: 28px 0 0; height: 46px; line-height: 46px; font-size: 40px; font-weight: 700; text-align: center; }
.results-row { display: flex; align-items: flex-start; gap: 47px; margin-top: 52px; padding-left: 25.5px; font-size: 20px; line-height: 23px; }
.summary { font-weight: 700; white-space: nowrap; margin-right: -.7px; }
.card { border: 1px solid #000; border-radius: 20px; padding: 9px; white-space: nowrap; }
.card-green { background: rgba(120, 230, 165, .33); padding: 9px 10px; }
.card-pairs { padding-bottom: 10px; }
.card-head { font-weight: 700; }
.loop-next { margin-top: 6px; }
.card hr { margin: 10px 0; }
.close-btn { align-self: center; margin-top: auto; margin-bottom: -1px; width: 92px; height: 43px; padding: 2px 0 0; border: 0; border-radius: 4px; background: #f44336; color: #fff; font-family: "Liberation Sans", Arial, sans-serif; font-size: 16.5px; }

/* Scrollbar */
.scrollbar { width: 15px; flex: none; margin-bottom: 4px; background: #444; border-radius: 0 8px 8px 0; display: flex; flex-direction: column; align-items: center; padding: 5px 0; }
.arrow-up, .arrow-down { width: 0; height: 0; border-left: 4px solid transparent; border-right: 4px solid transparent; }
.arrow-up { border-bottom: 5px solid #999; }
.arrow-down { border-top: 5px solid #ddd; margin-top: auto; }
.thumb { width: 11px; height: 894px; margin-top: 5px; background: #666; }

/* Edge sidebar */
.sidebar { width: 44px; flex: none; display: flex; flex-direction: column; align-items: center; padding-top: 15px; gap: 22.5px; }
.side-ic { width: 18px; height: 18px; display: block; flex: none; }
.side-sep { width: 28px; height: 1px; background: #5f5f5f; flex: none; }
.side-plus { width: 14px; height: 14px; }
.side-sep-low { margin-top: auto; }
.side-gear { margin: -8px 0 13px; }
```
